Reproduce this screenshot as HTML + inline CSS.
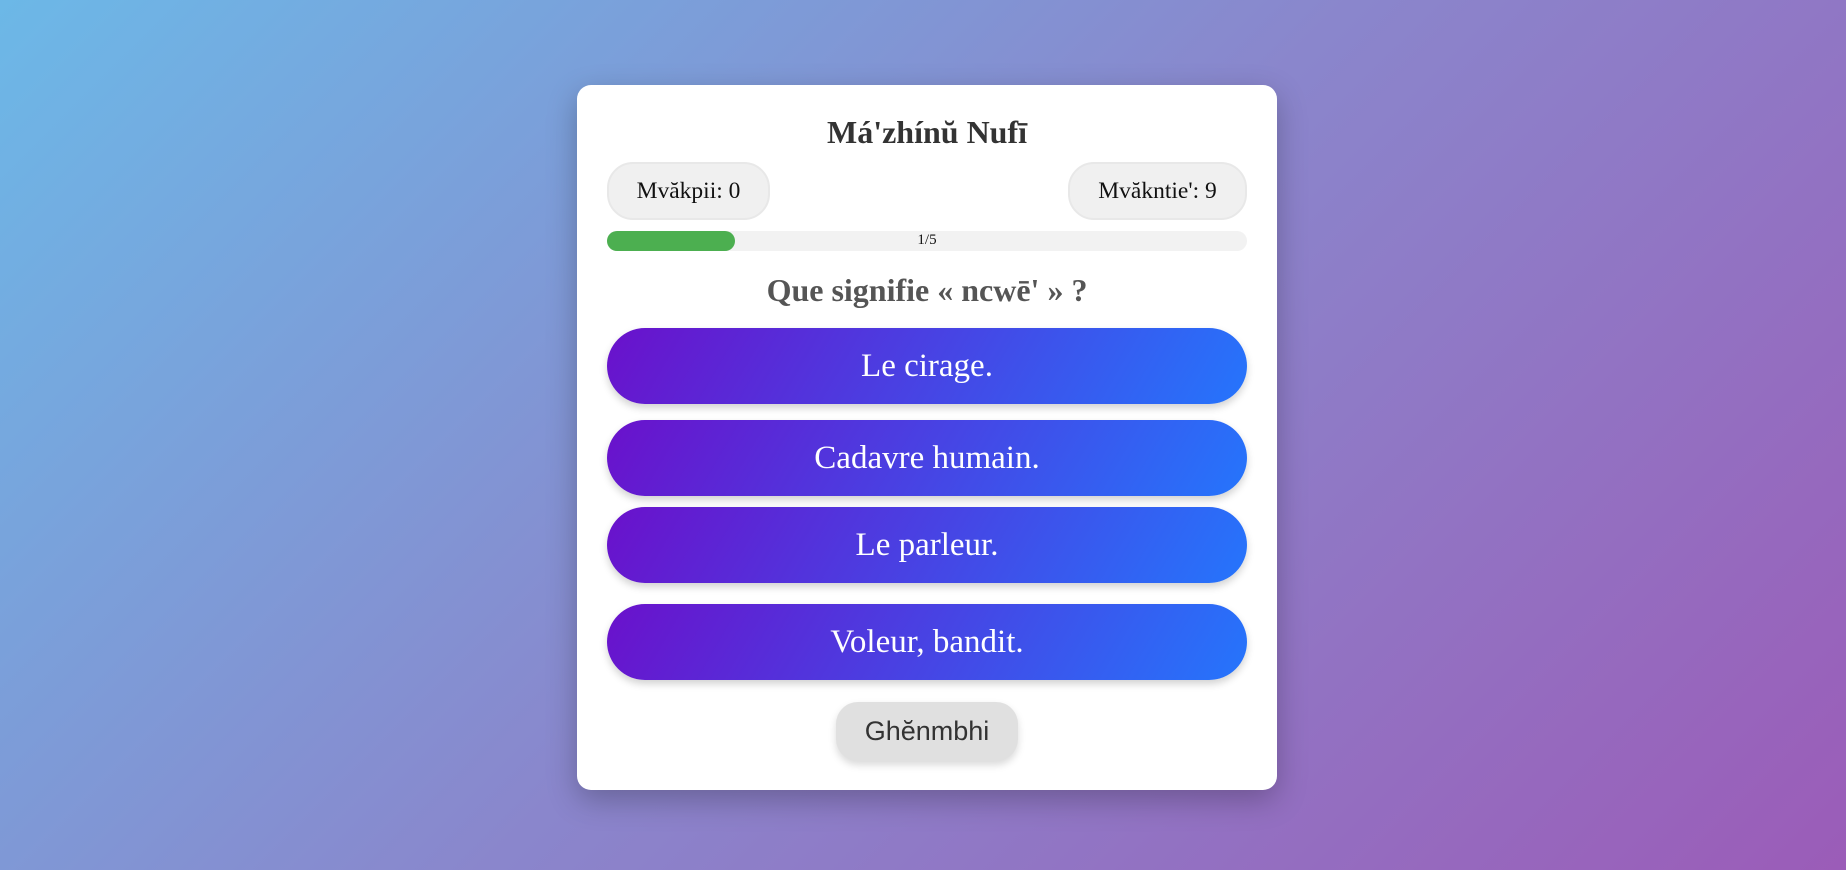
<!DOCTYPE html>
<html><head><meta charset="utf-8"><style>
*{box-sizing:border-box;margin:0;padding:0}
html,body{width:1846px;height:870px;overflow:hidden}
body{background:linear-gradient(135deg,#6cb8e7 0%,#8a86cc 50%,#9b5cb8 100%);font-family:"Liberation Serif",serif;position:relative}
.card{position:absolute;left:577px;top:85px;width:700px;height:705px;background:#fff;border-radius:14px;box-shadow:0 10px 30px rgba(0,0,0,.25)}
h1{position:absolute;left:0;width:700px;top:29px;text-align:center;font-size:32px;font-weight:bold;color:#333}
.pill{position:absolute;top:77px;height:58px;background:#f0f0f0;border:2px solid #e8e8e8;border-radius:26px;font-size:23.5px;color:#111;display:flex;align-items:center;justify-content:center}
.bar{position:absolute;left:30px;top:146px;width:640px;height:20px;background:#f2f2f2;border-radius:10px}
.fill{position:absolute;left:0;top:0;width:128px;height:20px;background:#4caf50;border-radius:10px}
.bar span{position:absolute;left:0;width:640px;text-align:center;top:1px;font-size:15px;color:#111}
.q{position:absolute;left:0;width:700px;top:187px;text-align:center;font-size:32px;font-weight:bold;color:#555}
.btn{position:absolute;left:30px;width:640px;height:76px;border-radius:38px;background:linear-gradient(120deg,#6a11cb 0%,#2575fc 100%);color:#fff;font-size:33px;display:flex;align-items:center;justify-content:center;box-shadow:0 4px 8px rgba(0,0,0,.18)}
.next{position:absolute;left:259px;top:617px;width:182px;height:59px;background:#e0e0e0;border-radius:22px;font-family:"Liberation Sans",sans-serif;font-size:27px;color:#333;display:flex;align-items:center;justify-content:center;box-shadow:0 4px 8px rgba(0,0,0,.15)}
</style></head><body>
<div class="card">
<h1>Má'zhínŭ Nufī</h1>
<div class="pill" style="left:30px;width:163px">Mvăkpii: 0</div>
<div class="pill" style="left:491px;width:179px">Mvăkntie': 9</div>
<div class="bar"><div class="fill"></div><span>1/5</span></div>
<div class="q">Que signifie « ncwē' » ?</div>
<div class="btn" style="top:243px">Le cirage.</div>
<div class="btn" style="top:335px">Cadavre humain.</div>
<div class="btn" style="top:422px">Le parleur.</div>
<div class="btn" style="top:519px">Voleur, bandit.</div>
<div class="next">Ghĕnmbhi</div>
</div>
</body></html>
